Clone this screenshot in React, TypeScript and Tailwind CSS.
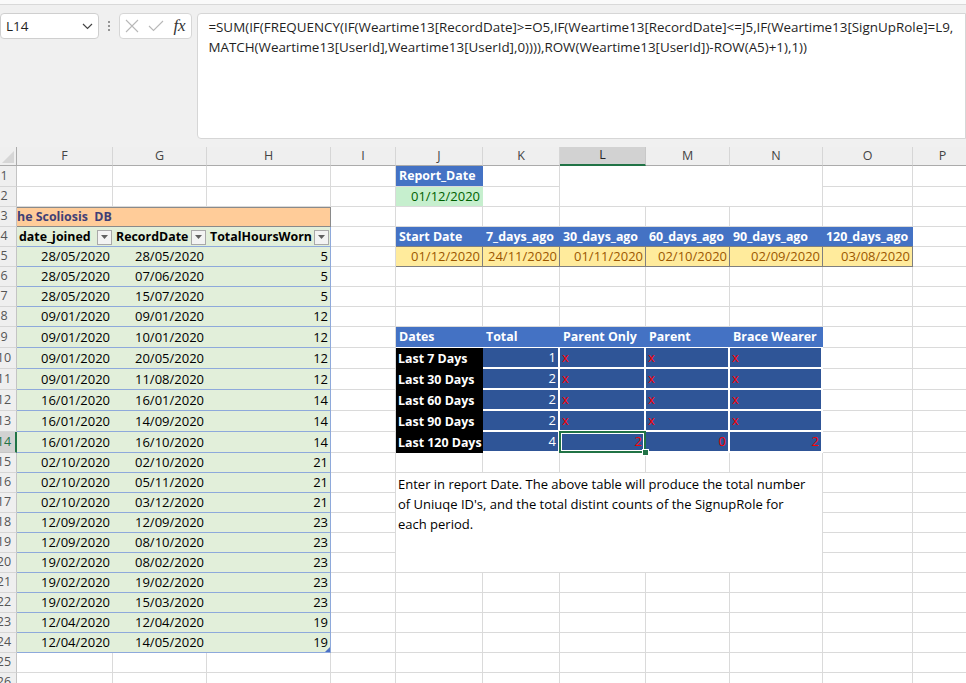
import React from 'react';

// Weartime sheet: formula bar on top, the Scoliosis DB table on the left,
// the report-date summary tables on the right.

const GRID = 'border-r border-b border-[#dadada]';
const CELL = 'flex items-center overflow-hidden whitespace-nowrap pt-[1px]';
const BOLD = 'font-bold text-[12.4px]';

const dbRows: [string, string, number][] = [
  ['28/05/2020', '28/05/2020', 5],
  ['28/05/2020', '07/06/2020', 5],
  ['28/05/2020', '15/07/2020', 5],
  ['09/01/2020', '09/01/2020', 12],
  ['09/01/2020', '10/01/2020', 12],
  ['09/01/2020', '20/05/2020', 12],
  ['09/01/2020', '11/08/2020', 12],
  ['16/01/2020', '16/01/2020', 14],
  ['16/01/2020', '14/09/2020', 14],
  ['16/01/2020', '16/10/2020', 14],
  ['02/10/2020', '02/10/2020', 21],
  ['02/10/2020', '05/11/2020', 21],
  ['02/10/2020', '03/12/2020', 21],
  ['12/09/2020', '12/09/2020', 23],
  ['12/09/2020', '08/10/2020', 23],
  ['19/02/2020', '08/02/2020', 23],
  ['19/02/2020', '19/02/2020', 23],
  ['19/02/2020', '15/03/2020', 23],
  ['12/04/2020', '12/04/2020', 19],
  ['12/04/2020', '14/05/2020', 19],
];

const periodHeaders = ['Start Date', '7_days_ago', '30_days_ago', '60_days_ago', '90_days_ago', '120_days_ago'];
const periodDates = ['01/12/2020', '24/11/2020', '01/11/2020', '02/10/2020', '02/09/2020', '03/08/2020'];

const summary = [
  { label: 'Last 7 Days', total: 1, split: null },
  { label: 'Last 30 Days', total: 2, split: null },
  { label: 'Last 60 Days', total: 2, split: null },
  { label: 'Last 90 Days', total: 2, split: null },
  { label: 'Last 120 Days', total: 4, split: [2, 0, 2] },
];

const Blank = () => <div className={GRID} />;

const DropBtn = () => (
  <span className="ml-auto mr-[1px] w-[15px] h-[15px] shrink-0 border border-[#a9a9a9] bg-[#f3f3f3] flex items-center justify-center">
    <svg width="7" height="4" viewBox="0 0 7 4">
      <path d="M0 0h7L3.5 4z" fill="#606060" />
    </svg>
  </span>
);

const RowHeader = ({ n, active }: { n: number; active?: boolean }) => (
  <div
    className={`flex items-center overflow-hidden border-b ${
      active
        ? 'bg-[#d2d2d2] border-b-[#c6c6c6] border-r-2 border-r-[#217346] text-[#217346]'
        : 'bg-[#efefef] border-b-[#d6d6d6] border-r border-r-[#c4c4c4] text-[#555]'
    }`}
  >
    <span className="-ml-[9px] w-[26px] shrink-0 text-center text-[12.5px]">{n}</span>
  </div>
);

const ColHeader = ({ letter }: { letter: string }) =>
  letter === 'L' ? (
    <div className="bg-[#d2d2d2] border-r border-r-[#c8c8c8] border-b-2 border-b-[#217346] flex items-center justify-center text-[12.5px] text-[#262626]">
      {letter}
    </div>
  ) : (
    <div className="bg-[#efefef] border-r border-r-[#d6d6d6] border-b border-b-[#ababab] flex items-center justify-center text-[12.5px] text-[#444]">
      {letter}
    </div>
  );

function leftCells(r: number): React.ReactNode[] {
  if (r === 3) {
    return [
      <div
        key="title"
        className={`${CELL} ${BOLD} col-span-3 bg-[#ffcc99] border-t border-t-[#8a8a8a] border-r border-r-[#8a8a8a] border-b border-b-[#8a8a8a] text-[#3f3f76]`}
      >
        he Scoliosis&nbsp; DB
      </div>,
    ];
  }
  if (r === 4) {
    const hdr = `${CELL} ${BOLD} bg-[#e2efda] border-b border-[#8ea9db] text-black`;
    return [
      <div key="f" className={`${hdr} pl-[2px]`}>date_joined<DropBtn /></div>,
      <div key="g" className={`${hdr} pl-[3px]`}>RecordDate<DropBtn /></div>,
      <div key="h" className={`${hdr} pl-[3px] border-r border-r-[#8ea9db]`}>TotalHoursWorn<DropBtn /></div>,
    ];
  }
  if (r >= 5 && r <= 24) {
    const [joined, rec, hrs] = dbRows[r - 5];
    const td = `${CELL} bg-[#e2efda] border-b border-[#8ea9db] justify-end text-black`;
    return [
      <div key="f" className={`${td} pr-[3px]`}>{joined}</div>,
      <div key="g" className={`${td} pr-[3px]`}>{rec}</div>,
      <div key="h" className={`${td} pr-[2px] border-r border-r-[#8ea9db] relative`}>
        {hrs}
        {r === 24 && (
          <svg className="absolute right-0 bottom-0" width="5" height="5" viewBox="0 0 5 5">
            <path d="M5 0V5H0z" fill="#4a6fc6" />
          </svg>
        )}
      </div>,
    ];
  }
  return [<Blank key="f" />, <Blank key="g" />, <Blank key="h" />];
}

function rightCells(r: number): React.ReactNode[] {
  const blue = `${CELL} ${BOLD} bg-[#4472c4] text-white pl-[3px]`;
  const out: React.ReactNode[] = [<Blank key="i" />];

  if (r === 1) {
    out.push(
      <div key="j" className={`${blue} border-b border-b-[#dadada]`}>Report_Date</div>,
      <Blank key="k" />,
      <div key="lmn" className={`col-span-3 row-span-2 ${GRID}`} />,
      <Blank key="o" />,
    );
  } else if (r === 2) {
    out.push(
      <div key="j" className={`${CELL} justify-end pr-[3px] bg-[#c6efce] text-[#006100] border-b border-[#dadada]`}>01/12/2020</div>,
      <Blank key="k" />,
      <Blank key="o" />,
    );
  } else if (r === 4) {
    periodHeaders.forEach((h) =>
      out.push(<div key={h} className={`${blue} border-b border-b-[#7f7f7f]`}>{h}</div>),
    );
  } else if (r === 5) {
    periodDates.forEach((d, i) =>
      out.push(
        <div key={i} className={`${CELL} justify-end pr-[2px] bg-[#ffeb9c] text-[#9c5700] border-r border-b border-[#7f7f7f]`}>
          {d}
        </div>,
      ),
    );
  } else if (r === 9) {
    ['Dates', 'Total', 'Parent Only', 'Parent', 'Brace Wearer'].forEach((h) =>
      out.push(<div key={h} className={`${blue} border-b border-b-white`}>{h}</div>),
    );
    out.push(<Blank key="o" />);
  } else if (r >= 10 && r <= 14) {
    const s = summary[r - 10];
    const navy = 'bg-[#2f5597] border-r-2 border-b-2 border-white';
    out.push(
      <div key="j" className={`${CELL} ${BOLD} bg-black text-white pl-[2px]`}>{s.label}</div>,
      <div key="k" className={`${CELL} ${navy} justify-end pr-[2px] text-white`}>{s.total}</div>,
    );
    for (let c = 0; c < 3; c++) {
      const selected = r === 14 && c === 0;
      out.push(
        <div
          key={`s${c}`}
          className={`${CELL} ${navy} text-[#ff0000] ${s.split ? 'justify-end pr-[2px]' : 'pl-[2px]'} ${selected ? 'relative z-10 overflow-visible' : ''}`}
        >
          {s.split ? s.split[c] : 'x'}
          {selected && (
            <>
              <div className="absolute -top-[1px] -left-[1px] -right-[2px] -bottom-[2px] border-2 border-[#217346] shadow-[inset_0_0_0_1px_#fff]" />
              <div className="absolute -right-[5px] -bottom-[5px] w-[7px] h-[7px] bg-[#217346] border border-white" />
            </>
          )}
        </div>,
      );
    }
    out.push(<Blank key="o" />);
  } else if (r === 16) {
    out.push(
      <div key="note" className={`col-span-5 row-span-5 ${GRID} pl-[2px] pt-[1px] leading-[20px] text-black`}>
        <div>Enter in report Date. The above table will produce the total number</div>
        <div>of Uniuqe ID's, and the total distint counts of the SignupRole for</div>
        <div>each period.</div>
      </div>,
      <Blank key="o" />,
    );
  } else if (r >= 17 && r <= 20) {
    out.push(<Blank key="o" />);
  } else {
    ['j', 'k', 'l', 'm', 'n', 'o'].forEach((k) => out.push(<Blank key={k} />));
  }

  out.push(<Blank key="p" />);
  return out;
}

const FormulaBar = () => (
  <div className="h-[147px] bg-[#f0f0f0] shrink-0">
    <div className="h-[5px] bg-[#fafafa] border-b border-[#d9d9d9]" />
    <div className="flex items-start mt-[8px]">
      <div className="w-[100px] h-[26px] bg-white border border-[#cfcfcf] rounded-[4px] flex items-center pl-[5px] pr-[5px] text-[13.5px] text-[#1f1f1f]">
        L14
        <svg className="ml-auto" width="11" height="7" viewBox="0 0 11 7">
          <path d="M1 1l4.5 4.5L10 1" fill="none" stroke="#444" strokeWidth="1.2" />
        </svg>
      </div>
      <div className="w-[21px] h-[26px] flex flex-col items-center justify-center gap-[2px]">
        <span className="w-[2px] h-[2px] bg-[#777] rounded-full" />
        <span className="w-[2px] h-[2px] bg-[#777] rounded-full" />
        <span className="w-[2px] h-[2px] bg-[#777] rounded-full" />
      </div>
      <div className="w-[74px] h-[26px] bg-white border border-[#d6d6d6] rounded-[4px] flex items-center pl-[5px] gap-[9px]">
        <svg width="14" height="14" viewBox="0 0 14 14">
          <path d="M1 1l12 12M13 1L1 13" stroke="#b8b8b8" strokeWidth="1.1" />
        </svg>
        <svg width="16" height="12" viewBox="0 0 16 12">
          <path d="M1 6l4.5 4.5L15 1" fill="none" stroke="#b8b8b8" strokeWidth="1.1" />
        </svg>
        <span className="font-['Liberation_Serif',serif] italic text-[17px] text-[#333] leading-none -mt-[2px]">
          fx
        </span>
      </div>
      <div className="ml-[5px] w-[780px] h-[126px] bg-white border border-[#d6d6d6] rounded-l-[4px] pl-[10px] pt-[3px] text-[13.4px] leading-[20px] text-[#1f1f1f] whitespace-nowrap">
        <div>=SUM(IF(FREQUENCY(IF(Weartime13[RecordDate]&gt;=O5,IF(Weartime13[RecordDate]&lt;=J5,IF(Weartime13[SignUpRole]=L9,</div>
        <div>MATCH(Weartime13[UserId],Weartime13[UserId],0)))),ROW(Weartime13[UserId])-ROW(A5)+1),1))</div>
      </div>
    </div>
  </div>
);

export default function App() {
  const cells: React.ReactNode[] = [];

  cells.push(
    <div key="corner" className="bg-[#efefef] border-r border-b border-[#ababab] relative">
      <svg className="absolute left-[2px] top-[4px]" width="12" height="12" viewBox="0 0 12 12">
        <path d="M12 0V12H0z" fill="#d6d6d6" />
      </svg>
    </div>,
  );
  ['F', 'G', 'H', 'I', 'J', 'K', 'L', 'M', 'N', 'O', 'P'].forEach((l) => cells.push(<ColHeader key={`c${l}`} letter={l} />));

  for (let r = 1; r <= 26; r++) {
    cells.push(
      <RowHeader key={`h${r}`} n={r} active={r === 14} />,
      ...leftCells(r).map((c, i) => <React.Fragment key={`${r}l${i}`}>{c}</React.Fragment>),
      ...rightCells(r).map((c, i) => <React.Fragment key={`${r}r${i}`}>{c}</React.Fragment>),
    );
  }

  return (
    <div className="w-[966px] h-[683px] overflow-hidden bg-white flex flex-col font-['Open_Sans',sans-serif] text-[13px]">
      <FormulaBar />
      <div className="grid grid-cols-[17px_96px_94px_124px_65px_87px_77px_86px_84px_93px_90px_60px] grid-rows-[19px_21px_repeat(7,20px)_repeat(6,21px)_repeat(12,20px)] w-[976px]">
        {cells}
      </div>
    </div>
  );
}
